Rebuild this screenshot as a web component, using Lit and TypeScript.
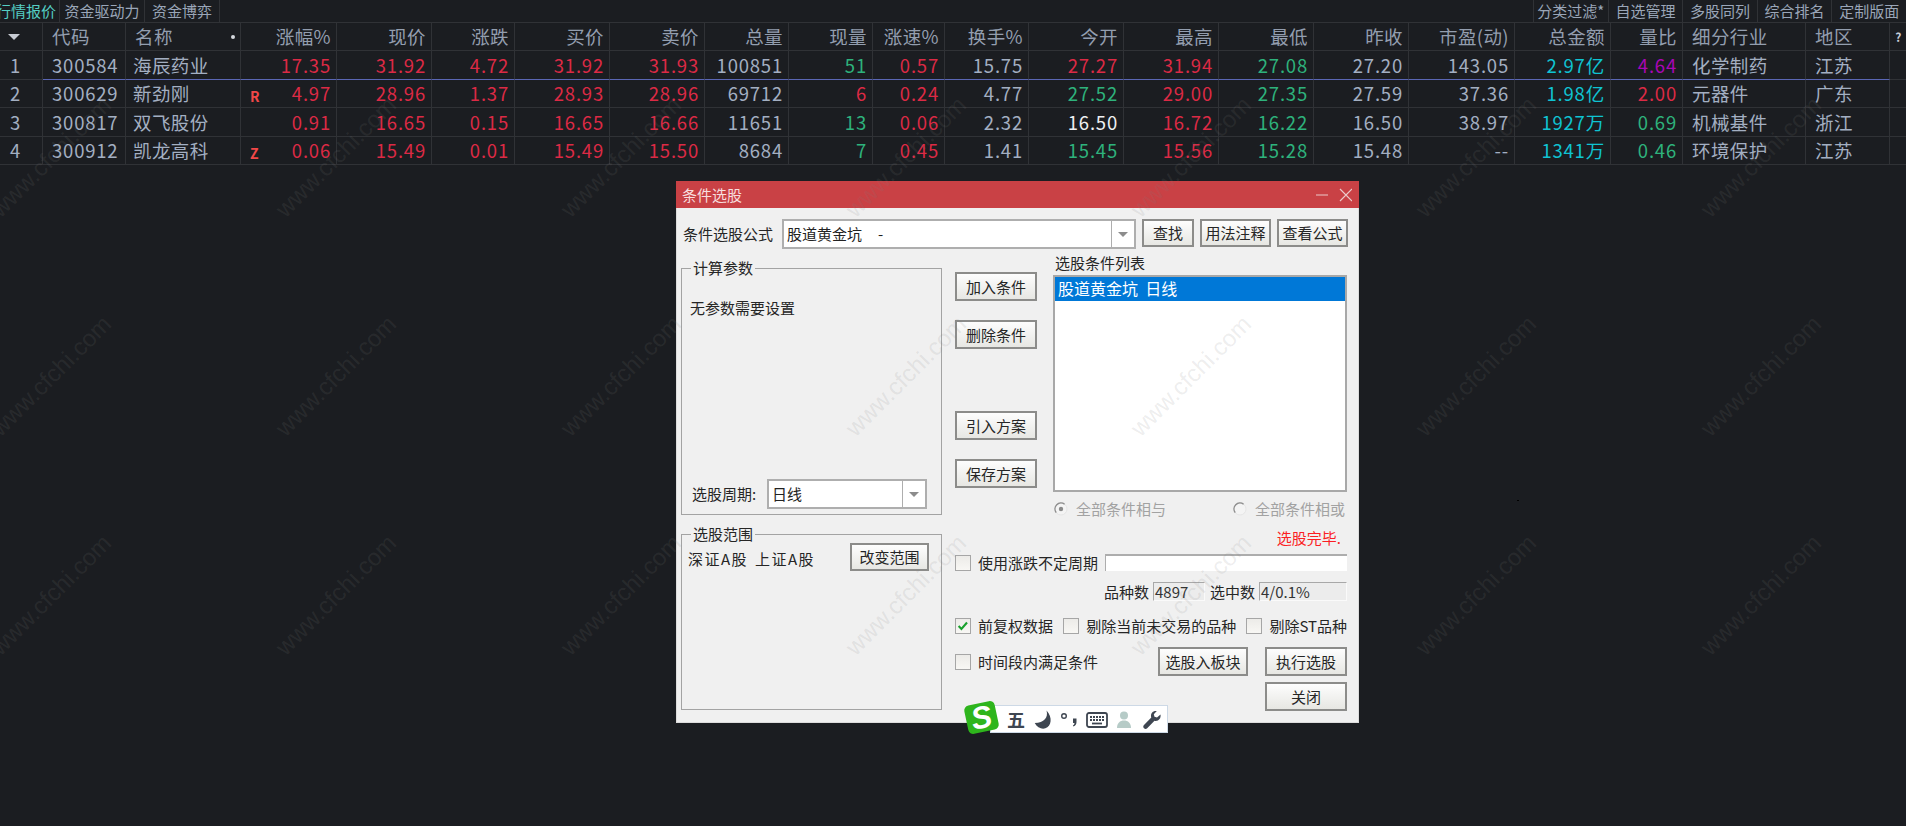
import { LitElement, html, css, svg } from "lit";
import { customElement } from "lit/decorators.js";
import { classMap } from "lit/directives/class-map.js";

type Cell = [string, string?];
const WIDTHS = [43, 83, 115, 96, 95, 83, 95, 95, 84, 84, 72, 84, 95, 95, 95, 95, 106, 96, 72, 123, 84, 17];
const HEAD = ["", "代码", "名称", "涨幅%", "现价", "涨跌", "买价", "卖价", "总量", "现量", "涨速%", "换手%", "今开", "最高", "最低", "昨收", "市盈(动)", "总金额", "量比", "细分行业", "地区", "?"];
const r = "r", g = "g", c = "c", w = "w", p = "p";
const ROWS: { mark?: string; cells: Cell[] }[] = [
  { cells: [["1"], ["300584"], ["海辰药业"], ["17.35", r], ["31.92", r], ["4.72", r], ["31.92", r], ["31.93", r], ["100851"], ["51", g], ["0.57", r], ["15.75"], ["27.27", r], ["31.94", r], ["27.08", g], ["27.20"], ["143.05"], ["2.97亿", c], ["4.64", p], ["化学制药"], ["江苏"], [""]] },
  { mark: "R", cells: [["2"], ["300629"], ["新劲刚"], ["4.97", r], ["28.96", r], ["1.37", r], ["28.93", r], ["28.96", r], ["69712"], ["6", r], ["0.24", r], ["4.77"], ["27.52", g], ["29.00", r], ["27.35", g], ["27.59"], ["37.36"], ["1.98亿", c], ["2.00", r], ["元器件"], ["广东"], [""]] },
  { cells: [["3"], ["300817"], ["双飞股份"], ["0.91", r], ["16.65", r], ["0.15", r], ["16.65", r], ["16.66", r], ["11651"], ["13", g], ["0.06", r], ["2.32"], ["16.50", w], ["16.72", r], ["16.22", g], ["16.50"], ["38.97"], ["1927万", c], ["0.69", g], ["机械基件"], ["浙江"], [""]] },
  { mark: "Z", cells: [["4"], ["300912"], ["凯龙高科"], ["0.06", r], ["15.49", r], ["0.01", r], ["15.49", r], ["15.50", r], ["8684"], ["7", g], ["0.45", r], ["1.41"], ["15.45", g], ["15.56", r], ["15.28", g], ["15.48"], ["--"], ["1341万", c], ["0.46", g], ["环境保护"], ["江苏"], [""]] },
];
const WM_X = [51, 336, 621, 906, 1191, 1476, 1761];
const WM_Y = [157, 376, 595];
const GRID = WIDTHS.map((n) => n + "px").join(" ");

const arrow = html`<span class="drop"><i class="tri"></i></span>`;
const box = (on = false) => html`<span class="box">${on ? html`<svg viewBox="0 0 16 16" width="14" height="14"><path d="M3 8l3.2 3.4L12.6 4" fill="none" stroke="#18a02c" stroke-width="2.4"/></svg>` : ""}</span>`;
const radio = (on: boolean) => html`<svg class="radio" viewBox="0 0 14 14" width="14" height="14">
  <circle cx="7" cy="7" r="6" fill="#f4f4f4" stroke="#e6e6e6"/>
  <path d="M2.2 10.6A6 6 0 0 1 10.6 2.2" fill="none" stroke="#8e8e8e" stroke-width="1.4"/>
  ${on ? svg`<circle cx="7" cy="7" r="2.2" fill="#8a8a8a"/>` : ""}
</svg>`;

@customElement("app-root")
export class AppRoot extends LitElement {
  static styles = css`
    :host { display: block; position: relative; width: 1906px; height: 826px; overflow: hidden; background: #1b1d21; font-family: "Noto Sans CJK SC", "Noto Sans", sans-serif; color: #9aa6b8; }
    .topbar { display: flex; justify-content: space-between; height: 23px; border-bottom: 1px solid #303236; box-sizing: border-box; font-size: 15px; line-height: 22px; }
    .tabs { display: flex; }
    .tab { box-sizing: border-box; text-align: center; border-right: 1px solid #303236; white-space: nowrap; }
    .tabs.left .tab:nth-child(1) { width: 67px; margin-left: -7px; color: #55cfc4; }
    .tabs.left .tab:nth-child(2) { width: 85px; }
    .tabs.left .tab:nth-child(3) { width: 75px; }
    .tabs.right .tab { width: 74.6px; border-right: 0; border-left: 1px solid #303236; }

    .row { display: grid; font-size: 18.5px; }
    .head { height: 28px; color: #939eaf; }
    .data { height: 28.6px; }
    .cell { box-sizing: border-box; display: flex; align-items: center; justify-content: flex-end; padding-right: 5px; border-right: 1px solid #303236; border-bottom: 1px solid #303236; white-space: nowrap; letter-spacing: .4px; color: #a3afc2; line-height: 1; position: relative; }
    .head .cell { color: #939eaf; }
    .num { letter-spacing: .8px; }
    .left { justify-content: flex-start; padding-right: 0; }
    .cell.i0 { padding-left: 10px; }
    .cell.i1 { padding-left: 9px; }
    .cell.i2 { padding-left: 7px; }
    .cell.i19, .cell.i20 { padding-left: 9px; }
    .head .cell.i2 { padding-left: 9px; justify-content: space-between; padding-right: 5px; }
    .cell.i21 { border-right: 0; justify-content: center; padding: 0; font-size: 12px; font-weight: 700; color: #c6ccd6; }
    .sel .cell { border-bottom-color: #5a66b4; }
    .sel .cell.i0, .sel .cell.i21 { border-bottom-color: #303236; }
    .cell.g { color: #2eb27c; } .cell.c { color: #0fc3d2; } .cell.w { color: #eef0f2; } .cell.p { color: #a907b5; }
    .cell.r { color: #dc2a45; }
    .mark { margin-right: auto; margin-left: 9px; margin-top: 5px; font-size: 14px; font-weight: 700; color: #f24848; letter-spacing: 0; }
    .dot { width: 4px; height: 4px; border-radius: 50%; background: #d5d8dd; }
    .sort { width: 0; height: 0; border: 6px solid transparent; border-top: 6px solid #c8ccd4; border-bottom: 0; margin-left: -2px; }

    .dialog { position: absolute; left: 676px; top: 181px; width: 683px; height: 542px; box-sizing: border-box; background: #f0f0f0; border: 1px solid #dcdcdc; border-top: 0; color: #262626; font-size: 15px; line-height: 20px; }
    .title { height: 27px; margin: 0 -1px; background: #c94145; color: #f7dede; display: flex; align-items: center; justify-content: space-between; padding: 0 7px 0 6px; }
    .ctrl { display: block; }
    .body { padding: 11px 0 0 4px; }
    .formula { display: flex; align-items: center; height: 30px; padding-left: 2px; }
    .formula .lab { width: 90px; margin-right: 9px; }
    .combo { box-sizing: border-box; display: flex; align-items: center; background: #fff; border: 2px solid #aeaeae; height: 30px; color: #222; }
    .combo .val { flex: 1; padding-left: 3px; }
    .combo.big { width: 354px; margin-right: 6px; }
    .combo.small { width: 160px; }
    .dash { margin-left: 16px; }
    .drop { width: 22px; align-self: stretch; display: flex; align-items: center; justify-content: center; border-left: 1px solid #aeaeae; }
    .tri { width: 0; height: 0; border: 5px solid transparent; border-top: 5px solid #8c8c8c; border-bottom: 0; }
    .btn { box-sizing: border-box; display: flex; align-items: center; justify-content: center; height: 29px; border: 2px solid #8c8c8a; background: linear-gradient(#fdfdfd, #e7e7e3); color: #262626; white-space: nowrap; }
    .b52 { width: 52px; margin-right: 6px; margin-top: -2px; height: 28px; }
    .b71 { width: 71px; margin-right: 6px; margin-top: -2px; height: 28px; }
    .b71.end { margin-right: 0; }

    .main { display: flex; margin-top: 4px; }
    .lcol { width: 261px; margin-top: 15px; margin-right: 13px; display: flex; flex-direction: column; gap: 19px; }
    .group { box-sizing: border-box; position: relative; border: 1px solid #a3a3a3; }
    .legend { position: absolute; left: 9px; top: -11px; padding: 0 2px; background: #f0f0f0; }
    .ga { height: 247px; display: flex; flex-direction: column; justify-content: space-between; padding: 29px 14px 5px 8px; }
    .period { display: flex; align-items: center; padding-left: 2px; gap: 10px; }
    .period span.pl { width: 65px; }
    .gb { height: 176px; display: flex; justify-content: space-between; align-items: flex-start; padding: 8px 12px 0 6px; }
    .gb .t { margin-top: 6px; letter-spacing: 1.5px; word-spacing: 2px; white-space: nowrap; }
    .gb .btn { width: 79px; height: 28px; }

    .rcol { width: 392px; }
    .upper { display: flex; gap: 16px; }
    .mid { width: 82px; padding-top: 19px; display: flex; flex-direction: column; }
    .mid .s19 { margin-top: 19px; }
    .mid .s62 { margin-top: 62px; }
    .listcol { width: 294px; }
    .listlab { height: 20px; margin-bottom: 2px; padding-left: 2px; }
    .list { box-sizing: border-box; height: 217px; background: #fff; border: 2px solid #a8a8a8; padding: 0; }
    .item { height: 24px; background: #0078d7; color: #fff; font-size: 16px; line-height: 23px; padding-left: 3px; white-space: pre; }

    .radios { display: flex; justify-content: space-between; margin: 8px 2px 0 99px; height: 18px; color: #a2a2a2; }
    .rd { display: flex; align-items: center; gap: 8px; }
    .radio { display: block; }
    .status { height: 20px; margin-top: 10px; text-align: right; padding-right: 6px; color: #fb1e24; }
    .chk { display: flex; align-items: center; gap: 7px; white-space: nowrap; }
    .box { box-sizing: border-box; width: 16px; height: 16px; border: 1px solid #a6a6a6; background: linear-gradient(#ecebe8, #f8f7f4); display: flex; align-items: center; justify-content: center; flex: none; }
    .r1 { display: flex; align-items: center; gap: 7px; margin-top: 6px; height: 17px; }
    .field { flex: 1; align-self: stretch; background: #fff; border-top: 2px solid #adadad; border-left: 1px solid #adadad; }
    .stats { display: flex; justify-content: flex-end; align-items: center; margin-top: 11px; height: 19px; }
    .sb { box-sizing: border-box; height: 19px; margin-left: 4px; background: #ececec; border-top: 1px solid #a8a8a8; border-left: 1px solid #a8a8a8; border-right: 1px solid #fafafa; border-bottom: 1px solid #fafafa; line-height: 17px; padding-left: 1px; color: #333; }
    .sb.a { width: 52px; margin-right: 5px; }
    .sb.b { width: 88px; }
    .r3 { display: flex; justify-content: space-between; margin-top: 17px; height: 16px; }
    .r4 { display: grid; grid-template-columns: 1fr 90px 82px; column-gap: 17px; row-gap: 6px; margin-top: 13px; align-items: center; }
    .r4 .close { grid-column: 3; }

    .wms { position: absolute; inset: 0; pointer-events: none; z-index: 2; }
    .wm { position: absolute; transform: translate(-50%, -50%) rotate(-45deg); font-family: "Liberation Sans", sans-serif; font-size: 24px; line-height: 1; color: rgba(128, 128, 128, .15); white-space: nowrap; }
    .speck { position: absolute; left: 1517px; top: 500px; width: 2px; height: 1px; background: #000; }

    .ime { position: absolute; left: 963px; top: 700px; width: 205px; height: 33px; z-index: 3; }
    .imebar { position: absolute; left: 27px; top: 5px; right: 0; bottom: 0; box-sizing: border-box; background: #fff; border: 1px solid #cdd9e6; }
    .logo { position: absolute; left: 3px; top: 3px; width: 31px; height: 29px; background: #2eb51c; border-radius: 5px; transform: rotate(-12deg); color: #fff; font: italic 700 31px/29px "Liberation Sans", sans-serif; text-align: center; }
    .wu { position: absolute; left: 16px; top: 1px; font-size: 18px; font-weight: 700; color: #3e4651; line-height: 25px; }
    .ic { position: absolute; top: 3px; display: block; }
    .i-moon { left: 40px; top: 1px; } .i-pun { left: 68px; } .i-kb { left: 95px; } .i-me { left: 124px; } .i-wr { left: 151px; }
  `;

  private row(cells: Cell[], selected: boolean, mark?: string) {
    return html`<div class=${classMap({ row: true, data: true, sel: selected })} style="grid-template-columns:${GRID}">
      ${cells.map(([t, col], i) => html`<div class=${classMap({ cell: true, ["i" + i]: true, left: i <= 2 || i === 19 || i === 20, num: i !== 2 && i !== 19 && i !== 20, [col || "n"]: true })}>${i === 3 && mark ? html`<span class="mark">${mark}</span>` : ""}${t}</div>`)}
    </div>`;
  }

  render() {
    return html`
      <div class="topbar">
        <div class="tabs left"><div class="tab">行情报价</div><div class="tab">资金驱动力</div><div class="tab">资金博弈</div></div>
        <div class="tabs right"><div class="tab">分类过滤*</div><div class="tab">自选管理</div><div class="tab">多股同列</div><div class="tab">综合排名</div><div class="tab">定制版面</div></div>
      </div>
      <div class="row head" style="grid-template-columns:${GRID}">
        ${HEAD.map((t, i) => html`<div class=${classMap({ cell: true, ["i" + i]: true, left: i <= 2 || i === 19 || i === 20 })}>${i === 0 ? html`<span class="sort"></span>` : t}${i === 2 ? html`<span class="dot"></span>` : ""}</div>`)}
      </div>
      ${ROWS.map((d, i) => this.row(d.cells, i === 0, d.mark))}

      <div class="dialog">
        <div class="title">
          <span>条件选股</span>
          <svg class="ctrl" width="36" height="14" viewBox="0 0 36 14"><path d="M0 7h12M24 1l12 12M36 1L24 13" stroke="#eccaca" stroke-width="1.2" fill="none"/></svg>
        </div>
        <div class="body">
          <div class="formula">
            <span class="lab">条件选股公式</span>
            <div class="combo big"><span class="val">股道黄金坑<span class="dash">-</span></span>${arrow}</div>
            <div class="btn b52">查找</div><div class="btn b71">用法注释</div><div class="btn b71 end">查看公式</div>
          </div>
          <div class="main">
            <div class="lcol">
              <div class="group ga">
                <span class="legend">计算参数</span>
                <div>无参数需要设置</div>
                <div class="period"><span class="pl">选股周期:</span><div class="combo small"><span class="val">日线</span>${arrow}</div></div>
              </div>
              <div class="group gb">
                <span class="legend">选股范围</span>
                <div class="t">深证A股 上证A股</div>
                <div class="btn">改变范围</div>
              </div>
            </div>
            <div class="rcol">
              <div class="upper">
                <div class="mid">
                  <div class="btn">加入条件</div>
                  <div class="btn s19">删除条件</div>
                  <div class="btn s62">引入方案</div>
                  <div class="btn s19">保存方案</div>
                </div>
                <div class="listcol">
                  <div class="listlab">选股条件列表</div>
                  <div class="list"><div class="item">股道黄金坑  日线</div></div>
                </div>
              </div>
              <div class="radios">
                <span class="rd">${radio(true)}全部条件相与</span>
                <span class="rd">${radio(false)}全部条件相或</span>
              </div>
              <div class="status">选股完毕.</div>
              <div class="r1">${box()}<span>使用涨跌不定周期</span><div class="field"></div></div>
              <div class="stats"><span>品种数</span><div class="sb a">4897</div><span>选中数</span><div class="sb b">4/0.1%</div></div>
              <div class="r3">
                <span class="chk">${box(true)}前复权数据</span>
                <span class="chk">${box()}剔除当前未交易的品种</span>
                <span class="chk">${box()}剔除ST品种</span>
              </div>
              <div class="r4">
                <span class="chk">${box()}时间段内满足条件</span>
                <div class="btn">选股入板块</div>
                <div class="btn">执行选股</div>
                <div class="btn close">关闭</div>
              </div>
            </div>
          </div>
        </div>
      </div>

      <div class="wms">
        ${WM_Y.map((y) => WM_X.map((x) => html`<span class="wm" style="left:${x}px;top:${y}px">www.cfchi.com</span>`))}
      </div>
      <i class="speck"></i>

      <div class="ime">
        <div class="imebar">
          <span class="wu">五</span>
          <svg class="ic i-moon" width="24" height="26" viewBox="0 0 20 22"><path d="M13 3c1.600 6-2 10.500-10 10.500C5 17.500 9 19 12 18c5-1.600 6.500-9 1-15z" fill="#3e4651"/></svg>
          <svg class="ic i-pun" width="20" height="22" viewBox="0 0 20 22"><circle cx="5" cy="7" r="2.300" fill="none" stroke="#3e4651" stroke-width="1.400"/><path d="M14 9.500h3.500v3.500c0 2-1 3.500-3 4.500l-.6-1c1-.6 1.500-1.300 1.600-2.500H14z" fill="#3e4651"/></svg>
          <svg class="ic i-kb" width="22" height="22" viewBox="0 0 22 22"><rect x="1" y="4" width="20" height="14" rx="2" fill="none" stroke="#3e4651" stroke-width="1.800"/><path d="M4 8h14M4 11h14" stroke="#3e4651" stroke-width="1.800" stroke-dasharray="2 1"/><path d="M6 14.500h10" stroke="#3e4651" stroke-width="1.800"/></svg>
          <svg class="ic i-me" width="18" height="22" viewBox="0 0 18 22"><circle cx="9" cy="6.500" r="4" fill="#b6cbc7"/><path d="M2 19c0-5 3-7.500 7-7.500s7 2.500 7 7.500z" fill="#b6cbc7"/></svg>
          <svg class="ic i-wr" width="20" height="22" viewBox="0 0 20 22"><path d="M18.500 5.500l-3.500 3-2.500-.7-.7-2.500 3-3.300C11.500 1.300 8.800 3.700 9 7c0 .7.100 1.200.3 1.600L2 16c-1 1-1 2.300 0 3.200 1 1 2.200 1 3.200 0l7.300-7.500c3.500 1 6.800-2 6-6.200z" fill="#3e4651"/></svg>
        </div>
        <div class="logo">S</div>
      </div>
    `;
  }
}
